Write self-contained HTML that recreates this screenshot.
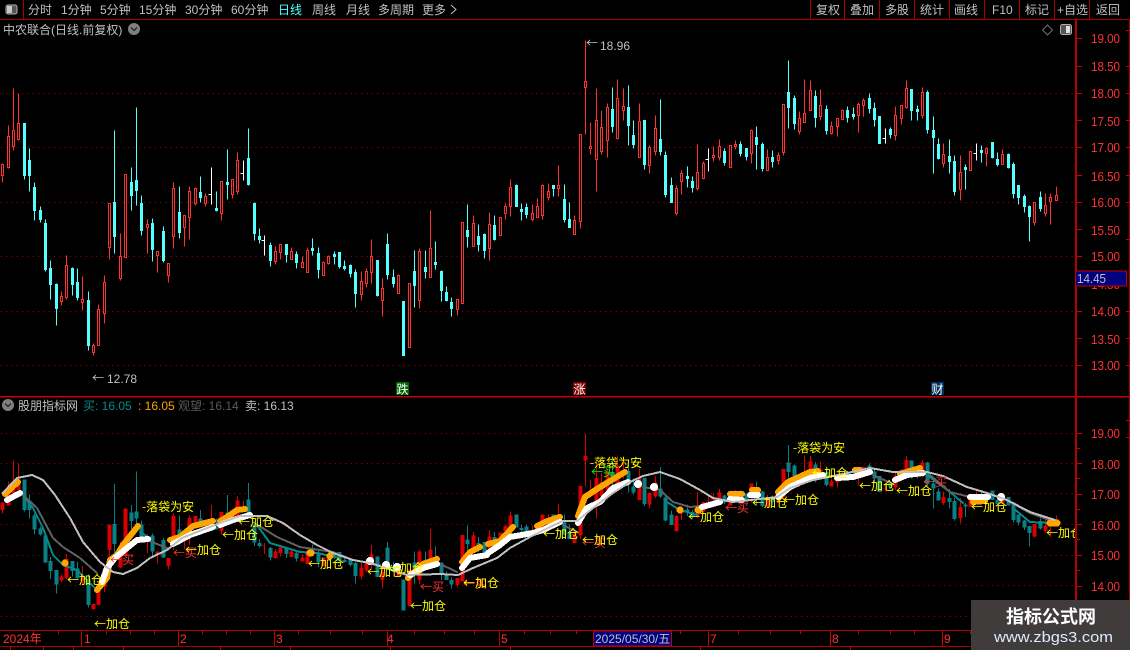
<!DOCTYPE html>
<html><head><meta charset="utf-8"><title>中农联合</title>
<style>
html,body{margin:0;padding:0;background:#000;width:1130px;height:650px;overflow:hidden}
svg{display:block}
text{font-family:"Liberation Sans","WenQuanYi Zen Hei","Noto Sans CJK SC",sans-serif;font-size:12px}
.t{fill:#c0c0c0}
.a{fill:#ff3232;font-size:13px}
.y,.r.s,.g,.arr{font-family:"Noto Sans CJK SC","WenQuanYi Zen Hei",sans-serif}
.y{fill:#ffff00}
.r{fill:#ff3232}
.g{fill:#00ff00}
.m{fill:#ff3232}
</style></head><body>
<svg width="1130" height="650" viewBox="0 0 1130 650" xmlns="http://www.w3.org/2000/svg">
<defs>
<path id="cw" d="M24 123V179M29 148V191M34 182V220M40 206V222M45 219V271M50 260V299M56 283V325M72 267V295M77 268V300M88 291V350M114 130V253M131 167V210M136 107V205M141 195V235M152 218V261M163 226V262M179 186V238M200 176V202M216 191V211M227 149V199M248 128V185M254 202V240M259 228V243M270 242V266M286 244V262M296 251V268M312 238V255M318 247V278M334 251V264M339 252V268M344 260V270M350 264V277M355 269V307M377 260V296M387 233V279M393 269V287M403 301V355M414 250V307M425 250V278M435 241V269M441 270V301M446 286V301M451 297V316M467 204V247M478 224V251M484 233V258M494 215V240M516 184V206M521 203V220M526 203V218M553 185V196M564 184V222M569 202V227M612 87V132M628 85V145M633 120V148M644 120V169M660 99V155M665 151V197M671 177V202M687 166V187M692 176V192M724 148V165M740 141V156M746 148V160M756 126V169M762 142V171M772 150V167M788 60V128M794 95V129M815 90V127M826 105V134M847 106V122M853 107V119M869 93V113M874 102V126M879 116V143M890 127V138M911 89V120M917 105V120M927 90V133M933 116V173M938 138V159M949 139V173M954 155V195M965 164V189M981 145V162M992 142V158M997 152V166M1008 153V168M1013 162V198M1018 185V204M1024 194V212M1029 205V241M1040 191V211"/>
<path id="cb" d="M23 123h2V175h-2zM28 160h2V175h-2zM33 187h2V210h-2zM39 210h2V219h-2zM44 223h2V269h-2zM49 268h2V284h-2zM55 284h2V308h-2zM71 268h2V284h-2zM76 282h2V297h-2zM87 300h2V345h-2zM113 202h2V236h-2zM130 182h2V195h-2zM135 180h2V190h-2zM140 203h2V230h-2zM151 223h2V249h-2zM162 231h2V260h-2zM178 212h2V232h-2zM199 192h2V197h-2zM215 208h2V210h-2zM226 182h2V184h-2zM247 158h2V184h-2zM253 203h2V233h-2zM258 236h2V239h-2zM269 245h2V260h-2zM285 244h2V254h-2zM295 254h2V262h-2zM311 248h2V250h-2zM317 253h2V269h-2zM333 254h2V256h-2zM338 252h2V266h-2zM343 266h2V268h-2zM349 265h2V273h-2zM354 272h2V293h-2zM376 260h2V295h-2zM386 244h2V274h-2zM392 277h2V283h-2zM402 301h2V355h-2zM413 271h2V285h-2zM424 267h2V271h-2zM434 262h2V264h-2zM440 271h2V290h-2zM445 292h2V300h-2zM450 302h2V308h-2zM466 230h2V236h-2zM477 236h2V244h-2zM483 234h2V250h-2zM493 225h2V239h-2zM515 185h2V206h-2zM520 209h2V211h-2zM525 207h2V214h-2zM552 185h2V188h-2zM563 199h2V219h-2zM568 219h2V227h-2zM611 109h2V126h-2zM627 107h2V125h-2zM632 135h2V144h-2zM643 120h2V164h-2zM659 139h2V151h-2zM664 155h2V194h-2zM670 185h2V202h-2zM686 176h2V178h-2zM691 181h2V187h-2zM723 151h2V162h-2zM739 144h2V153h-2zM745 148h2V156h-2zM755 137h2V144h-2zM761 144h2V168h-2zM771 157h2V161h-2zM787 92h2V107h-2zM793 98h2V123h-2zM814 96h2V117h-2zM825 109h2V130h-2zM846 110h2V117h-2zM852 114h2V116h-2zM868 98h2V108h-2zM873 108h2V119h-2zM878 116h2V143h-2zM889 129h2V134h-2zM910 89h2V110h-2zM916 109h2V111h-2zM926 92h2V129h-2zM932 130h2V137h-2zM937 144h2V158h-2zM948 156h2V161h-2zM953 161h2V191h-2zM964 167h2V169h-2zM980 150h2V152h-2zM991 142h2V157h-2zM996 159h2V164h-2zM1007 154h2V167h-2zM1012 164h2V193h-2zM1017 185h2V197h-2zM1023 196h2V206h-2zM1028 206h2V216h-2zM1039 197h2V208h-2z"/>
<path id="rw" d="M2 163V182M8 125V168M13 88V150M18 93V140M61 291V305M66 255V299M82 276V310M93 343V355M98 304V345M104 275V323M109 203V259M120 233V280M125 174V257M147 219V253M157 251V272M168 263V282M173 182V248M184 215V246M189 186V239M195 187V205M205 193V206M221 181V220M232 179V198M237 152V194M275 246V264M280 244V259M291 247V259M302 256V267M307 247V272M323 261V275M328 255V264M361 271V300M366 268V287M371 239V283M382 278V316M398 274V293M409 283V347M419 248V308M430 210V277M457 299V315M462 222V303M473 215V246M489 212V260M500 217V235M505 203V219M510 179V216M532 204V221M537 198V217M542 184V219M548 183V200M558 165V196M574 215V234M580 134V228M585 40V134M590 122V154M596 88V191M601 110V154M607 103V157M617 79V139M623 88V120M639 103V157M649 145V173M655 115V155M676 185V215M681 170V194M697 144V190M703 161V179M713 146V161M719 139V160M730 145V167M735 140V149M751 129V163M767 149V170M778 152V164M783 104V155M799 111V134M804 79V122M810 80V110M820 89V120M831 121V134M837 118V136M842 109V119M858 102V132M863 98V116M895 106V140M901 105V124M906 80V108M922 87V118M943 143V167M960 155V200M970 151V170M986 147V166M1002 149V164M1034 202V225M1045 193V216M1050 193V224M1056 186V200"/>
<path id="rb" d="M1 164h2V175h-2zM7 136h2V167h-2zM12 130h2V146h-2zM17 123h2V139h-2zM60 296h2V301h-2zM65 265h2V297h-2zM81 299h2V302h-2zM92 345h2V352h-2zM97 309h2V345h-2zM103 282h2V313h-2zM108 203h2V247h-2zM119 256h2V278h-2zM124 174h2V257h-2zM146 224h2V227h-2zM156 251h2V255h-2zM167 263h2V275h-2zM172 188h2V236h-2zM183 215h2V227h-2zM188 191h2V217h-2zM194 188h2V203h-2zM204 196h2V203h-2zM220 181h2V213h-2zM231 179h2V194h-2zM236 160h2V191h-2zM274 251h2V261h-2zM279 244h2V252h-2zM290 251h2V259h-2zM301 262h2V267h-2zM306 250h2V272h-2zM322 262h2V275h-2zM327 256h2V263h-2zM360 281h2V294h-2zM365 271h2V283h-2zM370 256h2V272h-2zM381 288h2V300h-2zM397 275h2V293h-2zM408 283h2V347h-2zM418 251h2V300h-2zM429 248h2V277h-2zM456 299h2V309h-2zM461 222h2V303h-2zM472 223h2V246h-2zM488 224h2V248h-2zM499 217h2V235h-2zM504 206h2V213h-2zM509 187h2V206h-2zM531 213h2V219h-2zM536 206h2V217h-2zM541 185h2V215h-2zM547 191h2V197h-2zM557 185h2V188h-2zM573 220h2V234h-2zM579 134h2V221h-2zM584 81h2V87h-2zM589 146h2V148h-2zM595 120h2V159h-2zM600 127h2V151h-2zM606 107h2V140h-2zM616 98h2V138h-2zM622 106h2V110h-2zM638 121h2V157h-2zM648 147h2V165h-2zM654 128h2V151h-2zM675 188h2V213h-2zM680 173h2V181h-2zM696 172h2V188h-2zM702 163h2V178h-2zM712 155h2V157h-2zM718 146h2V157h-2zM729 145h2V167h-2zM734 144h2V146h-2zM750 130h2V153h-2zM766 157h2V170h-2zM777 155h2V160h-2zM782 104h2V152h-2zM798 118h2V131h-2zM803 113h2V122h-2zM809 90h2V110h-2zM819 105h2V116h-2zM830 126h2V133h-2zM836 118h2V126h-2zM841 110h2V119h-2zM857 104h2V115h-2zM862 100h2V105h-2zM894 115h2V135h-2zM900 105h2V118h-2zM905 88h2V107h-2zM921 92h2V115h-2zM942 154h2V163h-2zM959 172h2V189h-2zM969 151h2V170h-2zM985 148h2V153h-2zM1001 154h2V164h-2zM1033 202h2V222h-2zM1044 205h2V213h-2zM1049 197h2V201h-2zM1055 195h2V200h-2z"/>
<path id="ww" d="M211 167V204M208 194h3M243 160V180M240 173h3M264 235V255M261 240h3M708 148V171M705 159h3M885 128V143M882 138h3M976 143V160M973 153h3"/>
<clipPath id="pane"><rect x="0" y="398" width="1075" height="232"/></clipPath>
</defs>

<!-- top toolbar -->
<g fill="#a80000">
<rect x="0" y="19" width="1130" height="1"/>
<rect x="23" y="0" width="1" height="19"/>
<rect x="810" y="0" width="1" height="19"/><rect x="844" y="0" width="1" height="19"/><rect x="879" y="0" width="1" height="19"/><rect x="914" y="0" width="1" height="19"/><rect x="949" y="0" width="1" height="19"/><rect x="984" y="0" width="1" height="19"/><rect x="1019" y="0" width="1" height="19"/><rect x="1054" y="0" width="1" height="19"/><rect x="1089" y="0" width="1" height="19"/>
</g>
<rect x="6" y="5" width="11" height="9" rx="2" fill="#555" stroke="#b0b0b0"/><rect x="7" y="6" width="5" height="7" fill="#c8c8c8"/>
<g class="t">
<text class="t" x="28" y="14">分时</text>
<text class="t" x="61" y="14">1分钟</text>
<text class="t" x="100" y="14">5分钟</text>
<text class="t" x="139" y="14">15分钟</text>
<text class="t" x="185" y="14">30分钟</text>
<text class="t" x="231" y="14">60分钟</text>
<text x="278" y="14" style="fill:#54ffff">日线</text>
<text class="t" x="312" y="14">周线</text>
<text class="t" x="346" y="14">月线</text>
<text class="t" x="378" y="14">多周期</text>
<text class="t" x="422" y="14">更多</text>
<path d="M451 5l5 4.5l-5 4.5" fill="none" stroke="#c0c0c0"/>
<text class="t" x="816" y="14">复权</text>
<text class="t" x="850" y="14">叠加</text>
<text class="t" x="885" y="14">多股</text>
<text class="t" x="920" y="14">统计</text>
<text class="t" x="954" y="14">画线</text>
<text class="t" x="992" y="14">F10</text>
<text class="t" x="1025" y="14">标记</text>
<text class="t" x="1057" y="14">+自选</text>
<text class="t" x="1096" y="14">返回</text>
</g>

<!-- title row -->
<text class="t" x="3" y="34">中农联合(日线.前复权)</text>
<circle cx="134" cy="29" r="6" fill="#808080"/><path d="M131 27.5l3 3l3-3" fill="none" stroke="#222" stroke-width="1.3"/>
<path d="M1047.5 25l5 5l-5 5l-5-5z" fill="none" stroke="#707070"/>
<rect x="1060.5" y="24.5" width="11" height="10" rx="2" fill="#555" stroke="#b0b0b0"/><rect x="1066" y="26" width="4" height="7" fill="#e0e0e0"/>

<!-- grid -->
<g stroke="#a80000" stroke-dasharray="1 4.3" fill="none">
<path d="M1 93.5H1075M1 147.5H1075M1 202.5H1075M1 256.5H1075M1 311.5H1075M1 365.5H1075"/>
<path d="M1 433.5H1075M1 463.5H1075M1 493.5H1075M1 524.5H1075M1 555.5H1075M1 585.5H1075M1 616.5H1075"/>
</g>

<!-- top candles -->
<g transform="translate(.5 .5)" fill="none" shape-rendering="crispEdges">
<use href="#cw" stroke="#54ffff"/>
<use href="#rw" stroke="#ff3232"/>
<use href="#ww" stroke="#ffffff"/>
<use href="#cb" stroke="#54ffff" fill="#54ffff"/>
<use href="#rb" stroke="#ff3232" fill="#000"/>
</g>

<text class="t arr" x="92" y="382">←</text><text class="t" x="107" y="383">12.78</text>
<text class="t arr" x="586" y="47">←</text><text class="t" x="600" y="50">18.96</text>

<!-- event markers -->
<rect x="396" y="382" width="13" height="13" fill="#006400"/><text x="396.5" y="393.5" style="fill:#fff">跌</text>
<rect x="573" y="382" width="13" height="13" fill="#800000"/><text x="573.5" y="393.5" style="fill:#fff">涨</text>
<rect x="931" y="382" width="13" height="13" fill="#00305f"/><text x="931.5" y="393.5" style="fill:#fff">财</text>

<!-- panel separators -->
<rect x="0" y="396" width="1130" height="1.5" fill="#c80000"/>
<rect x="0" y="630" width="1130" height="1" fill="#a80000"/>
<rect x="0" y="646" width="1130" height="1" fill="#a80000"/>
<rect x="1075" y="20" width="2" height="630" fill="#b40000"/>
<rect x="1129" y="20" width="1" height="630" fill="#a80000"/>

<!-- axis ticks -->
<path stroke="#c80000" fill="none" d="M1077 38.5h5M1077 66.5h5M1077 93.5h5M1077 120.5h5M1077 147.5h5M1077 175.5h5M1077 202.5h5M1077 229.5h5M1077 256.5h5M1077 311.5h5M1077 338.5h5M1077 365.5h5M1077 433.5h5M1077 448.5h3M1077 463.5h5M1077 478.5h3M1077 494.5h5M1077 509.5h3M1077 524.5h5M1077 539.5h3M1077 555.5h5M1077 570.5h3M1077 586.5h5"/>
<path stroke="#c80000" fill="none" d="M1126 30.5h4M1126 66.5h4M1126 93.5h4M1126 120.5h4M1126 147.5h4M1126 175.5h4M1126 202.5h4M1126 239.5h4M1126 311.5h4M1126 338.5h4M1126 365.5h4M1126 420.5h4M1126 437.5h4"/>

<!-- axis labels -->
<g>
<text class="a" x="1091" y="43" textLength="29" lengthAdjust="spacingAndGlyphs">19.00</text>
<text class="a" x="1091" y="71" textLength="29" lengthAdjust="spacingAndGlyphs">18.50</text>
<text class="a" x="1091" y="98" textLength="29" lengthAdjust="spacingAndGlyphs">18.00</text>
<text class="a" x="1091" y="126" textLength="29" lengthAdjust="spacingAndGlyphs">17.50</text>
<text class="a" x="1091" y="152" textLength="29" lengthAdjust="spacingAndGlyphs">17.00</text>
<text class="a" x="1091" y="181" textLength="29" lengthAdjust="spacingAndGlyphs">16.50</text>
<text class="a" x="1091" y="207" textLength="29" lengthAdjust="spacingAndGlyphs">16.00</text>
<text class="a" x="1091" y="235" textLength="29" lengthAdjust="spacingAndGlyphs">15.50</text>
<text class="a" x="1091" y="261" textLength="29" lengthAdjust="spacingAndGlyphs">15.00</text>
<text class="a" x="1091" y="289" textLength="29" lengthAdjust="spacingAndGlyphs">14.50</text>
<text class="a" x="1091" y="316" textLength="29" lengthAdjust="spacingAndGlyphs">14.00</text>
<text class="a" x="1091" y="344" textLength="29" lengthAdjust="spacingAndGlyphs">13.50</text>
<text class="a" x="1091" y="370" textLength="29" lengthAdjust="spacingAndGlyphs">13.00</text>
<text class="a" x="1091" y="438" textLength="29" lengthAdjust="spacingAndGlyphs">19.00</text>
<text class="a" x="1091" y="469" textLength="29" lengthAdjust="spacingAndGlyphs">18.00</text>
<text class="a" x="1091" y="499" textLength="29" lengthAdjust="spacingAndGlyphs">17.00</text>
<text class="a" x="1091" y="530" textLength="29" lengthAdjust="spacingAndGlyphs">16.00</text>
<text class="a" x="1091" y="560" textLength="29" lengthAdjust="spacingAndGlyphs">15.00</text>
<text class="a" x="1091" y="591" textLength="29" lengthAdjust="spacingAndGlyphs">14.00</text>
</g>
<rect x="1075.5" y="271" width="51" height="15" fill="#000080" stroke="#c80000"/>
<text x="1077" y="283" style="font-size:13px;fill:#c0c0c0" textLength="29" lengthAdjust="spacingAndGlyphs">14.45</text>

<!-- lower header -->
<circle cx="8" cy="405" r="6" fill="#808080"/><path d="M5 403.5l3 3l3-3" fill="none" stroke="#222" stroke-width="1.3"/>
<text class="t" x="18" y="410">股朋指标网</text>
<text x="83" y="410" style="fill:#008c8c">买: 16.05</text>
<text x="138" y="410" style="fill:#ffa500">: 16.05</text>
<text x="178" y="410" style="fill:#5a5a5a">观望: 16.14</text>
<text x="245" y="410" style="fill:#c0c0c0">卖: 16.13</text>

<!-- lower candles -->
<g transform="translate(.5 411.46) scale(1 .5596)" fill="none" shape-rendering="crispEdges">
<use href="#cw" stroke="#0a8086"/>
<use href="#rw" stroke="#d80000"/>
<use href="#ww" stroke="#d80000"/>
<use href="#cb" stroke="#0a8086" fill="#0a8086" stroke-width="2"/>
<use href="#rb" stroke="#d80000" fill="#d80000" stroke-width="2"/>
</g>

<!-- lines -->
<g fill="none" stroke-linejoin="round" stroke-linecap="round" clip-path="url(#pane)">
<g stroke="#008c8c" stroke-width="2" shape-rendering="crispEdges">
<path d="M22 494L33 508L43 528L53 555L63 565L77 570L97 590"/>
<path d="M140 532L150 538"/>
<path d="M257 525L270 543L300 552L317 553L340 558"/>
<path d="M438 563L457 572"/>
<path d="M667 502L680 510L697 515"/>
<path d="M927 475L950 492L963 503"/>
<path d="M1013 508L1030 522L1050 523"/>
</g>
<g stroke="#606060" stroke-width="2" shape-rendering="crispEdges">
<path d="M22 494L37 508L53 538L63 547L80 558L97 573"/>
<path d="M147 540L167 548"/>
<path d="M253 522L277 537L300 547L333 552L353 560L380 565"/>
<path d="M438 563L457 572"/>
<path d="M563 525L577 532"/>
<path d="M643 487L660 490L673 502L690 507L713 505"/>
<path d="M873 475L893 484"/>
<path d="M930 475L950 492L970 497"/>
<path d="M1003 498L1030 513L1055 522"/>
</g>
<g stroke="#ffa500" stroke-width="6" shape-rendering="crispEdges">
<path d="M5 494L18 482"/>
<path d="M97 590L107 578L110 560L117 555L123 545L138 526"/>
<path d="M170 540L180 537L193 526L213 521"/>
<path d="M220 521L227 517L237 510L245 509"/>
<path d="M408 578L423 564L437 559"/>
<path d="M462 562L470 552L480 547"/>
<path d="M488 544L500 541L513 527"/>
<path d="M537 526L545 522L560 517"/>
<path d="M578 516L585 497L597 489L610 481L625 472"/>
<path d="M730 494L742 494M752 490L758 490"/>
<path d="M778 492L788 482L810 472L818 471"/>
<path d="M855 470L860 470"/>
<path d="M900 474L920 468"/>
<path d="M973 502L985 501"/>
<path d="M1050 523L1057 523" stroke-width="7"/>
<path d="M65 563h.1M310 553h1M330 556h.1M680 510h.1M698 510h1" stroke-width="7"/>
</g>
<g stroke="#ffffff" stroke-width="6" shape-rendering="crispEdges">
<path d="M7 500L20 493"/>
<path d="M102 582L107 568L115 558L127 548L137 540L148 539"/>
<path d="M173 544L190 535L213 527"/>
<path d="M220 525L233 520L250 515"/>
<path d="M410 575L423 568L437 564"/>
<path d="M462 568L470 558L487 555"/>
<path d="M488 553L500 545L510 537L533 533"/>
<path d="M533 533L543 530L560 522"/>
<path d="M578 523L587 508L600 502L613 488L628 482"/>
<path d="M702 507L720 502"/>
<path d="M730 499L742 500M750 495L758 495"/>
<path d="M778 497L790 487L810 478L823 475"/>
<path d="M837 478L853 477L870 472"/>
<path d="M895 480L907 475L923 473"/>
<path d="M970 497L988 497"/>
<path d="M370 561h.1M386 565h.1M397 567h.1M638 484h.1M654 487h.1M1001 497h.1" stroke-width="8"/>
</g>
<g stroke="#c0c0c0" stroke-width="2" shape-rendering="crispEdges">
<path d="M2.7 493L17 478L32 475L43 480L55 495L70 518L83 542L100 562L113 572L123 574L137 568L150 558L167 550L182 538L197 532L220 523L240 516L267 516L283 523L300 535L317 545L333 553L353 560L370 563L407 575L440 574L458 575L473 568L497 558L510 548L530 537L550 527L563 521L577 521L593 508L613 493L630 482L643 476L660 472L680 479L700 490L713 498L733 502L777 497L790 488L813 480L843 474L870 468L893 472L927 472L943 476L967 487L987 493L1007 500L1030 512L1055 520"/>
</g>

<!-- signal labels -->
<g stroke="none">
<text class="y" x="67" y="584">←加仓</text>
<text class="y" x="94" y="628">←加仓</text>
<text class="r s" x="110" y="564">←买</text>
<text class="y" x="142" y="511">-落袋为安</text>
<text class="r s" x="173" y="557">←买</text>
<text class="y" x="185" y="554">←加仓</text>
<text class="y" x="222" y="539">←加仓</text>
<text class="y" x="238" y="526">←加仓</text>
<text class="y" x="308" y="568">←加仓</text>
<text class="y" x="367" y="576">←加仓</text>
<text class="y" x="388" y="572">←加仓</text>
<text class="r s" x="420" y="591">←买</text>
<text class="y" x="410" y="610">←加仓</text>
<text class="r s" x="463" y="588">←买</text>
<text class="y" x="463" y="587">←加仓</text>
<text class="y" x="543" y="538">←加仓</text>
<text class="r s" x="582" y="547">←买</text>
<text class="y" x="582" y="544">←加仓</text>
<text class="g" x="591" y="476">←买</text>
<text class="y" x="590" y="467">-落袋为安</text>
<text class="y" x="688" y="521">←加仓</text>
<text class="r s" x="725" y="512">←买</text>
<text class="y" x="752" y="507">←加仓</text>
<text class="y" x="783" y="504">←加仓</text>
<text class="y" x="793" y="452">-落袋为安</text>
<text class="y" x="812" y="477">←加仓</text>
<text class="y" x="859" y="490">←加仓</text>
<text class="y" x="896" y="495">←加仓</text>
<text class="r s" x="923" y="486">←买</text>
<text class="y" x="971" y="511">←加仓</text>
<text class="y" x="1046" y="537">←加仓</text>
</g>
</g>

<!-- time axis -->
<path stroke="#c80000" fill="none" d="M81.5 631V646M178.5 631V646M274.5 631V646M387.5 631V646M499.5 631V646M708.5 631V646M830.5 631V646M942.5 631V646M33.5 631v3M58.5 631v3M106.5 631v3M130.5 631v3M154.5 631v3M202.5 631v3M226.5 631v3M250.5 631v3M298.5 631v3M330.5 631v3M362.5 631v3M414.5 631v3M444.5 631v3M474.5 631v3M524.5 631v3M550.5 631v3M576.5 631v3M680.5 631v3M738.5 631v3M770.5 631v3M800.5 631v3M858.5 631v3M890.5 631v3M914.5 631v3M970.5 631v3M10.5 646v4M43.5 646v4M73.5 646v4M123.5 646v4M220.5 646v4M290.5 646v4M390.5 646v4M510.5 646v4M700.5 646v4M850.5 646v4"/>
<text class="r" x="3" y="643">2024年</text>
<text class="r" x="84" y="643">1</text>
<text class="r" x="180" y="643">2</text>
<text class="r" x="276" y="643">3</text>
<text class="r" x="387" y="643">4</text>
<text class="r" x="501" y="643">5</text>
<rect x="593.5" y="631" width="78" height="15" fill="#000080" stroke="#c80000"/>
<text x="595" y="643" style="fill:#c0c0c0">2025/05/30/五</text>
<text class="r" x="710" y="643">7</text>
<text class="r" x="832" y="643">8</text>
<text class="r" x="944" y="643">9</text>

<!-- watermark -->
<rect x="971" y="600" width="159" height="50" fill="#403c3c"/>
<text x="1051" y="623" text-anchor="middle" style="font-size:18px;font-weight:bold;fill:#fff">指标公式网</text>
<text x="994" y="642" style="font-size:15px;fill:#dfeaff" textLength="119" lengthAdjust="spacingAndGlyphs">www.zbgs3.com</text>
</svg>
</body></html>
